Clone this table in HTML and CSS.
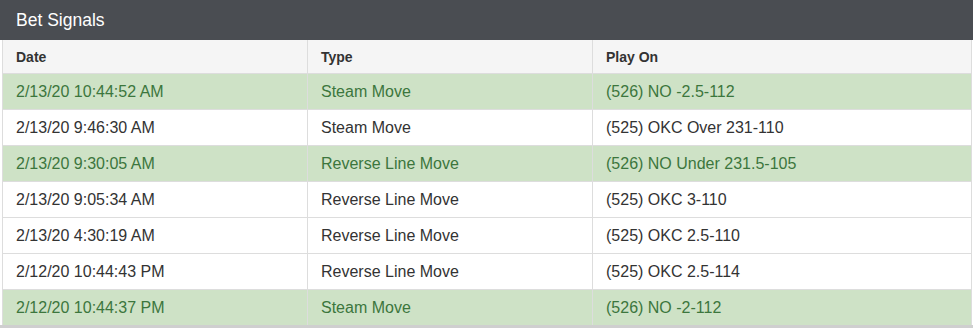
FILE: index.html
```html
<!DOCTYPE html>
<html>
<head>
<meta charset="utf-8">
<link rel="stylesheet" href="styles.css">
</head>
<body>
<div class="panel">
  <div class="panel-title">Bet Signals</div>
  <div class="panel-body">
    <table class="signals">
      <thead>
        <tr><th class="c1">Date</th><th class="c2">Type</th><th class="c3">Play On</th></tr>
      </thead>
      <tbody>
        <tr class="hit"><td>2/13/20 10:44:52 AM</td><td>Steam Move</td><td>(526) NO -2.5-112</td></tr>
        <tr><td>2/13/20 9:46:30 AM</td><td>Steam Move</td><td>(525) OKC Over 231-110</td></tr>
        <tr class="hit"><td>2/13/20 9:30:05 AM</td><td>Reverse Line Move</td><td>(526) NO Under 231.5-105</td></tr>
        <tr><td>2/13/20 9:05:34 AM</td><td>Reverse Line Move</td><td>(525) OKC 3-110</td></tr>
        <tr><td>2/13/20 4:30:19 AM</td><td>Reverse Line Move</td><td>(525) OKC 2.5-110</td></tr>
        <tr><td>2/12/20 10:44:43 PM</td><td>Reverse Line Move</td><td>(525) OKC 2.5-114</td></tr>
        <tr class="hit"><td>2/12/20 10:44:37 PM</td><td>Steam Move</td><td>(526) NO -2-112</td></tr>
      </tbody>
    </table>
  </div>
</div>
</body>
</html>
```

FILE: styles.css
```css
html, body {
  margin: 0;
  padding: 0;
  background: #ffffff;
}
body {
  font-family: "Liberation Sans", Arial, sans-serif;
  font-size: 16px;
  color: #333333;
}
.panel {
  width: 973px;
}
.panel-title {
  height: 40px;
  box-sizing: border-box;
  background: #4a4d52;
  color: #ffffff;
  font-size: 17.5px;
  line-height: 40px;
  padding-left: 16px;
}
.panel-body {
  padding: 0 1px 0 2px;
  border-bottom: 3px solid #cfcfcf;
}
.signals {
  width: 100%;
  border-collapse: collapse;
  border-left: 1px solid #dddddd;
  border-right: 1px solid #dddddd;
}
.signals th, .signals td {
  text-align: left;
  padding: 0 13px;
  height: 35px;
  border-top: 1px solid #dddddd;
  border-left: 1px solid #dddddd;
  font-weight: normal;
  white-space: nowrap;
}
.signals th:first-child, .signals td:first-child {
  border-left: none;
}
.signals thead tr:first-child th {
  border-top: none;
}
.signals th {
  background: #f5f5f5;
  font-weight: bold;
  font-size: 14px;
  height: 33px;
  color: #333333;
}
.signals .c1 { width: 278px; }
.signals .c2 { width: 258px; }
.signals tr.hit td {
  background: #cee2c6;
  color: #3c763d;
}
```
